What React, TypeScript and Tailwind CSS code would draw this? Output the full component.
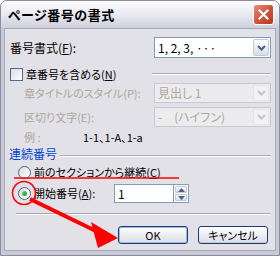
import React from "react";

const font = "font-['Noto_Sans_CJK_JP','Noto_Sans',sans-serif] [font-feature-settings:'palt']";

function Chevron({ disabled }: { disabled?: boolean }) {
  return (
    <svg width="9" height="6" viewBox="0 0 9 6">
      <path d="M1 1 L4.5 4.5 L8 1" fill="none" stroke={disabled ? "#c4c4cc" : "#4d6185"} strokeWidth="2" />
    </svg>
  );
}

function Combo({ value, disabled }: { value: string; disabled?: boolean }) {
  return (
    <div
      className={`flex h-full w-[117px] items-center border ${
        disabled ? "border-[#c9c9d2] bg-[#ececef] text-[#aca899]" : "border-[#7f9db9] bg-white text-black"
      }`}
    >
      <span className="flex-1 pl-[3px] text-[12px] leading-none whitespace-pre">{value}</span>
      <div
        className={`mr-px flex h-[calc(100%-2px)] w-[16px] items-center justify-center rounded-[2px] border ${
          disabled ? "border-[#e4e4ea] bg-[#f2f2f4]" : "border-[#c3c8d6] bg-gradient-to-b from-[#ffffff] to-[#d9dce6]"
        }`}
      >
        <Chevron disabled={disabled} />
      </div>
    </div>
  );
}

function Radio({ checked }: { checked?: boolean }) {
  return (
    <div className="flex h-[13px] w-[13px] items-center justify-center rounded-full border border-[#4b6a8e] bg-gradient-to-br from-[#dcdce2] to-[#ffffff]">
      {checked && <div className="h-[5px] w-[5px] rounded-full bg-gradient-to-br from-[#5cd45c] to-[#1e9a1e]" />}
    </div>
  );
}

function Etched({ className }: { className: string }) {
  return <div className={`h-[2px] border-t border-[#a9a9b4] border-b border-b-white ${className}`} />;
}

function Button({ label, focused }: { label: string; focused?: boolean }) {
  return (
    <div
      className={`flex h-full w-[70px] items-center justify-center rounded-[3px] border border-[#1c3e73] bg-gradient-to-b from-[#ffffff] to-[#dcdde6] text-[11px] leading-none ${
        focused ? "shadow-[inset_0_0_0_1px_#9db8e6]" : "shadow-[inset_0_-1px_0_#c6c8d4]"
      }`}
    >
      {label}
    </div>
  );
}

export default function App() {
  return (
    <div className={`relative flex h-[256px] w-[280px] flex-col overflow-hidden rounded-t-[7px] border border-[#8b8ba2] bg-[#c9c9d6] text-black ${font}`}>
      {/* title bar */}
      <div className="flex h-[27px] shrink-0 items-center justify-between bg-gradient-to-b from-[#fdfdfe] via-[#e9e9f0] to-[#cfcfdc] pl-[7px] pr-[5px]">
        <span className="text-[13px] font-bold leading-none tracking-[0.5px]">ページ番号の書式</span>
        <div className="flex h-[21px] w-[21px] items-center justify-center rounded-[3px] border border-white bg-gradient-to-br from-[#e88b74] via-[#d2553b] to-[#b8381f]">
          <svg width="11" height="11" viewBox="0 0 11 11">
            <path d="M1.5 1.5 L9.5 9.5 M9.5 1.5 L1.5 9.5" stroke="white" strokeWidth="2.2" strokeLinecap="square" />
          </svg>
        </div>
      </div>

      {/* body */}
      <div className="mx-[3px] mb-[4px] flex flex-1 flex-col border border-[#a7a7b8] bg-[#e2e1e7] text-[11px]">
        <div className="mt-[8px] flex h-[21px] items-center justify-between pl-[5px] pr-[4px]">
          <span className="text-[12px] leading-none">
            番号書式(<span className="underline">F</span>):
          </span>
          <Combo value="1, 2, 3, ···" />
        </div>

        <div className="mt-[8px] flex h-[16px] items-center pl-[5px] pr-[4px]">
          <div className="h-[13px] w-[13px] border border-[#4b6a8e] bg-gradient-to-br from-[#dcdce2] to-[#ffffff]" />
          <span className="ml-[3px] leading-none">
            章番号を含める(<span className="underline">N</span>)
          </span>
          <Etched className="ml-auto w-[119px]" />
        </div>

        <div className="mt-px flex h-[20px] items-center justify-between pl-[19px] pr-[4px] text-[#aca899]">
          <span className="leading-none">章タイトルのスタイル(P):</span>
          <Combo value="見出し 1" disabled />
        </div>

        <div className="mt-[4px] flex h-[20px] items-center justify-between pl-[19px] pr-[4px] text-[#aca899]">
          <span className="leading-none">区切り文字(E):</span>
          <Combo value="-　(ハイフン)" disabled />
        </div>

        <div className="mt-[3px] flex h-[14px] items-center pl-[19px] leading-none">
          <span className="w-[59px] text-[#aca899]">例 :</span>
          <span>1-1、1-A、1-a</span>
        </div>

        <div className="mt-[3px] flex h-[14px] items-center pl-[4px] pr-[4px]">
          <span className="text-[12px] leading-none text-[#0046d5]">連続番号</span>
          <Etched className="ml-[3px] mt-[3px] flex-1" />
        </div>

        <div className="mt-[4px] flex h-[14px] items-center pl-[13px]">
          <Radio />
          <span className="ml-[3px] leading-none">
            前のセクションから継続(<span className="underline">C</span>)
          </span>
        </div>

        <div className="mt-[5px] flex h-[19px] items-center pl-[13px]">
          <Radio checked />
          <span className="ml-[3px] w-[80px] leading-none">
            開始番号(<span className="underline">A</span>):
          </span>
          <div className="flex h-full w-[60px] items-center border border-[#7f9db9] bg-white pl-[3px] text-[12px] leading-none">1</div>
          <div className="flex h-full w-[15px] flex-col gap-px border border-l-0 border-[#7f9db9] bg-white p-px">
            <div className="flex flex-1 items-center justify-center rounded-[1px] border border-[#c3c8d6] bg-gradient-to-b from-[#ffffff] to-[#d9dce6]">
              <svg width="7" height="4" viewBox="0 0 7 4"><path d="M0 4 L3.5 0 L7 4Z" fill="#4d6185" /></svg>
            </div>
            <div className="flex flex-1 items-center justify-center rounded-[1px] border border-[#c3c8d6] bg-gradient-to-b from-[#ffffff] to-[#d9dce6]">
              <svg width="7" height="4" viewBox="0 0 7 4"><path d="M0 0 L3.5 4 L7 0Z" fill="#4d6185" /></svg>
            </div>
          </div>
        </div>

        <Etched className="ml-[11px] mr-[4px] mt-[10px]" />

        <div className="mt-[11px] flex h-[18px] justify-end gap-[10px] pr-[7px]">
          <Button label="OK" focused />
          <Button label="キャンセル" />
        </div>
      </div>

      {/* red annotations */}
      <svg className="pointer-events-none absolute left-[-1px] top-[-1px]" width="280" height="256" viewBox="0 0 280 256">
        <line x1="14" y1="178" x2="179" y2="178" stroke="#ff0000" strokeWidth="1.5" />
        <circle cx="24" cy="193" r="11.5" fill="none" stroke="#ff0000" strokeWidth="1.5" />
        <line x1="30" y1="199" x2="100" y2="233" stroke="#ff0000" strokeWidth="4" />
        <polygon points="118,238 91,222 98,248" fill="#ff0000" />
      </svg>
    </div>
  );
}
